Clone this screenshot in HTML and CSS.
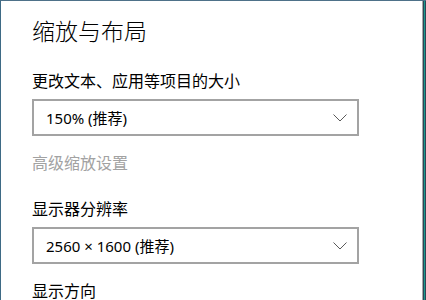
FILE: index.html
```html
<!DOCTYPE html>
<html lang="zh-CN">
<head>
<meta charset="utf-8">
<link rel="stylesheet" href="styles.css">
</head>
<body>
<div class="window">
  <div class="content">
    <h1 class="title">缩放与布局</h1>
    <div class="label first">更改文本、应用等项目的大小</div>
    <div class="select">
      <span class="value">150% (推荐)</span>
      <svg class="chev" width="14" height="8" viewBox="0 0 14 8"><path d="M0.5 0.5 L7 7 L13.5 0.5" fill="none" stroke="#5a5a5a" stroke-width="1"/></svg>
    </div>
    <div class="label link">高级缩放设置</div>
    <div class="label section">显示器分辨率</div>
    <div class="select">
      <span class="value">2560 × 1600 (推荐)</span>
      <svg class="chev" width="14" height="8" viewBox="0 0 14 8"><path d="M0.5 0.5 L7 7 L13.5 0.5" fill="none" stroke="#5a5a5a" stroke-width="1"/></svg>
    </div>
    <div class="label link-after">显示方向</div>
  </div>
  <div class="edge"></div>
</div>
</body>
</html>
```
FILE: styles.css
```css
html, body {
  margin: 0;
  padding: 0;
  background: #ffffff;
  overflow: hidden;
}
body {
  font-family: "Noto Sans", "Noto Sans CJK SC", sans-serif;
  color: #000;
}
.window {
  display: flex;
  height: 300px;
  box-sizing: border-box;
  border-top: 1px solid #4e7189;
  border-left: 1px solid #3e6a85;
}
.content {
  flex: 1;
  border-right: 1px solid #a8a8a8;
  padding-left: 31px;
  padding-right: 63px;
  padding-top: 13px;
}
.edge {
  width: 3px;
  background: linear-gradient(to right, #2b4657 0 1px, #1c9a8b 1px 2px, #2b4657 2px 3px);
}
.title {
  margin: 0;
  font-size: 23px;
  font-weight: 300;
  line-height: 32px;
  font-family: "Noto Sans CJK SC", sans-serif;
}
.label {
  font-size: 16px;
  line-height: 22px;
  font-family: "Noto Sans", "Noto Sans CJK SC", sans-serif;
}
.first { margin-top: 24px; }
.select {
  margin-top: 7px;
  height: 37px;
  box-sizing: border-box;
  border: 2px solid #a3a3a3;
  display: flex;
  align-items: center;
  justify-content: space-between;
  padding: 0 10px 0 12px;
  font-size: 15px;
}
.chev { display: block; margin-top: 1px; }
.link {
  margin-top: 16px;
  color: #a2a2a2;
}
.section { margin-top: 24px; }
.link-after { margin-top: 16px; }
```
